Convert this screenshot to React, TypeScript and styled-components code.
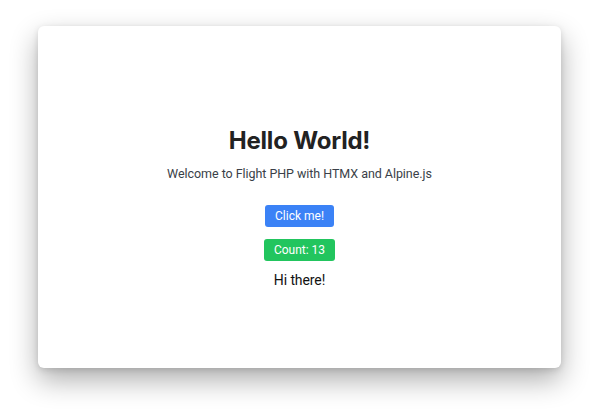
import React, { useState } from "react";
import styled, { createGlobalStyle } from "styled-components";

const GlobalStyle = createGlobalStyle`
  html, body {
    margin: 0;
    padding: 0;
    background: #ffffff;
  }
  body {
    font-family: Roboto, "Liberation Sans", Arial, sans-serif;
  }
`;

const Page = styled.div`
  width: 600px;
  height: 420px;
  padding: 26px 39px 52px 38px;
  box-sizing: border-box;
  display: flex;
`;

const Card = styled.div`
  flex: 1;
  background: #ffffff;
  border-radius: 6px;
  box-shadow: 0 12px 28px rgba(0, 0, 0, 0.32), 0 2px 6px rgba(0, 0, 0, 0.12);
  display: flex;
  flex-direction: column;
  align-items: center;
  padding-top: 100px;
  box-sizing: border-box;
`;

const Title = styled.h1`
  margin: 0;
  font-family: Inter, "Liberation Sans", Arial, sans-serif;
  font-size: 24px;
  line-height: 29px;
  font-weight: 700;
  color: #222222;
  letter-spacing: -0.2px;
`;

const Subtitle = styled.p`
  margin: 11px 0 0;
  font-size: 12.5px;
  line-height: 15px;
  letter-spacing: -0.05px;
  color: #3a3f48;
`;

const Actions = styled.div`
  margin-top: 24px;
  display: flex;
  flex-direction: column;
  align-items: center;
  gap: 12px;
`;

const Button = styled.button<{ $tone: "blue" | "green" }>`
  border: none;
  border-radius: 3px;
  font-family: inherit;
  font-size: 12px;
  color: #ffffff;
  padding: 0 10px;
  height: 22px;
  cursor: pointer;
  background: ${(p) => (p.$tone === "blue" ? "#3b82f6" : "#22c55e")};
`;

const Message = styled.div`
  margin-top: 11px;
  font-size: 14px;
  line-height: 16px;
  letter-spacing: -0.1px;
  color: #111111;
`;

export default function App() {
  const [count, setCount] = useState(13);
  const [said, setSaid] = useState(true);

  return (
    <>
      <GlobalStyle />
      <Page>
        <Card>
          <Title>Hello World!</Title>
          <Subtitle>Welcome to Flight PHP with HTMX and Alpine.js</Subtitle>
          <Actions>
            <Button $tone="blue" onClick={() => setSaid(true)}>
              Click me!
            </Button>
            <Button $tone="green" onClick={() => setCount(count + 1)}>
              Count: {count}
            </Button>
          </Actions>
          {said && <Message>Hi there!</Message>}
        </Card>
      </Page>
    </>
  );
}
